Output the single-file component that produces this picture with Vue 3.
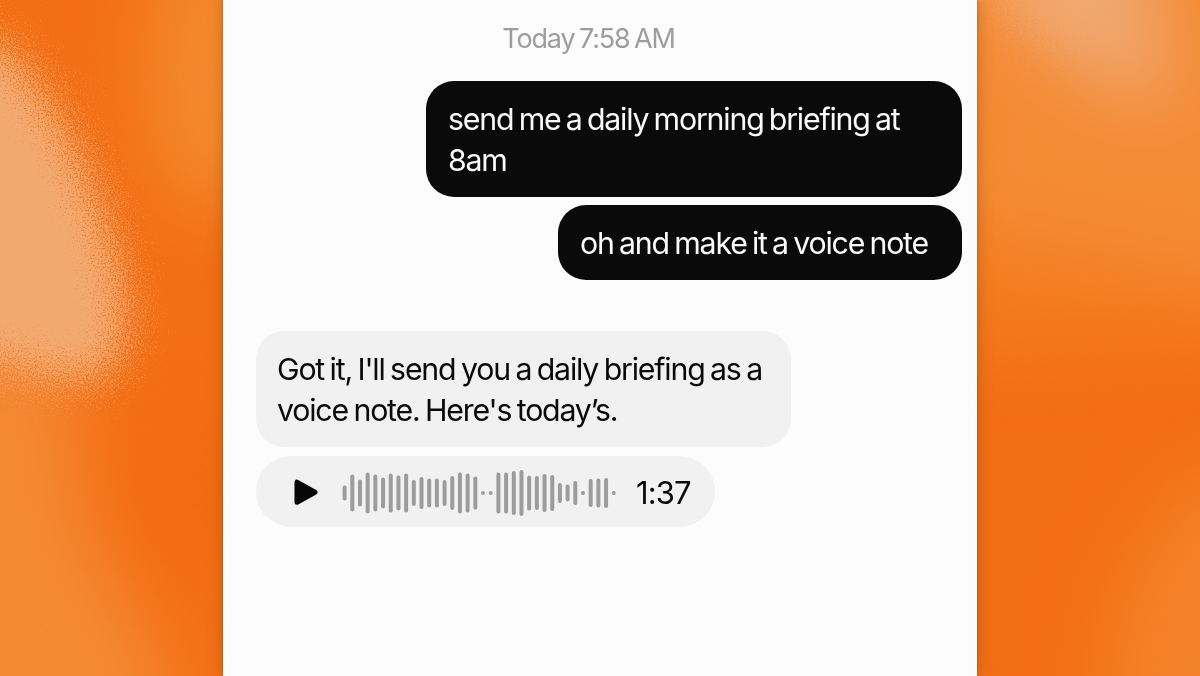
<script setup>
import { ref, computed } from "vue";

const sent = ref([
    "send me a daily morning briefing at 8am",
    "oh and make it a voice note"
])

const reply = ref("Got it, I'll send you a daily briefing as a voice note. Here's today’s.")

// bar heights of the voice note
const levels = [
    15, 37, 27, 41, 37, 31, 39, 35, 39, 26, 32, 29, 29, 26, 34, 41, 39, 33,
    4, 4, 41, 41, 44, 46, 35, 34, 38, 36, 20, 17, 24, 4, 28, 29, 30, 4
]

const bars = computed(() => levels.map((h, i) => ({
    x: i * 7.69 + 0.6,
    y: 24 - h / 2,
    h
})))
</script>


<template>
    <div class="page">
        <!-- Orange backdrop -->
        <svg class="backdrop" width="1200" height="676" viewBox="0 0 1200 676" aria-hidden="true">
            <defs>
                <filter id="soft" x="-100%" y="-100%" width="300%" height="300%" color-interpolation-filters="sRGB">
                    <feGaussianBlur stdDeviation="36" />
                </filter>
                <filter id="edge" x="-100%" y="-100%" width="300%" height="300%" color-interpolation-filters="sRGB">
                    <feGaussianBlur stdDeviation="15" />
                </filter>
                <filter id="grain" filterUnits="userSpaceOnUse" x="-100" y="-100" width="1400" height="876" color-interpolation-filters="sRGB">
                    <feTurbulence type="fractalNoise" baseFrequency="0.6" numOctaves="2" seed="4" result="noise" />
                    <feDisplacementMap in="SourceGraphic" in2="noise" scale="120" xChannelSelector="R" yChannelSelector="G" />
                </filter>
            </defs>
            <!-- smooth colour areas -->
            <rect width="1200" height="676" fill="#f36f16" />
            <g filter="url(#soft)">
                <ellipse cx="215" cy="75" rx="68" ry="140" fill="#f48a2e" />
                <path d="M-150 330 L60 360 L75 450 L85 530 L150 640 L190 760 L-150 800 Z" fill="#f48a34" />
                <ellipse cx="195" cy="490" rx="40" ry="75" fill="#f26910" />
                <path d="M920 -100 L1350 -100 L1350 310 L1130 280 L940 230 Z" fill="#f48b35" />
                <path d="M940 230 L1250 290 L1250 335 L940 350 Z" fill="#f47b20" />
                <path d="M1300 450 L1180 495 L1120 600 L1100 760 L1350 760 Z" fill="#f48229" />
                <path d="M985 -80 L1130 -80 L1175 100 L1120 90 L1020 20 Z" fill="#f0ab78" />
            </g>
            <!-- grainy peach spots -->
            <g filter="url(#grain)">
                <path filter="url(#edge)" d="M-150 20 L0 44 C35 70 78 140 105 220 C124 270 133 330 117 362 C100 388 70 385 0 364 L-150 345 Z" fill="#f2a970" />
                <path filter="url(#edge)" d="M990 -80 L1090 -80 L1100 50 L1060 42 L1000 5 Z" fill="#f2a970" opacity="0.5" />
            </g>
        </svg>

        <!-- Chat -->
        <main class="chat">
            <p class="time">Today 7:58 AM</p>

            <div class="sent">
                <div v-for="msg in sent" :key="msg" class="bubble dark">{{ msg }}</div>
            </div>

            <div class="received">
                <div class="bubble light">{{ reply }}</div>
                <div class="voice">
                    <svg class="play" width="24" height="27" viewBox="0 0 24 27">
                        <path d="M3 3.2 V23.2 L21 13.2 Z" fill="#060606" stroke="#060606" stroke-width="5" stroke-linejoin="round" />
                    </svg>
                    <svg class="wave" width="274" height="48" viewBox="0 0 274 48">
                        <rect v-for="(bar, i) in bars" :key="i" :x="bar.x" :y="bar.y" width="4" :height="bar.h" rx="2" fill="#9c9c9c" />
                    </svg>
                    <span class="length">1:37</span>
                </div>
            </div>
        </main>
    </div>
</template>


<style>
body {
    margin: 0;
    overflow: hidden;
}
</style>

<style scoped>
.page {
    position: relative;
    display: flex;
    justify-content: center;
    width: 1200px;
    height: 676px;
    overflow: hidden;
    font-family: Inter, "Liberation Sans", sans-serif;
}

.backdrop {
    position: absolute;
    top: 0;
    left: 0;
}

.chat {
    position: relative;
    box-sizing: border-box;
    width: 754px;
    height: 676px;
    padding: 21px 15px 0 33px;
    background-color: #fcfcfc;
    box-shadow: 0 0 14px rgba(110, 60, 10, 0.35), 0 0 2px rgba(110, 60, 10, 0.5);
}

.time {
    margin: 0 41px 24px 0;
    font-size: 27px;
    line-height: 36px;
    letter-spacing: -1.15px;
    word-spacing: -2px;
    text-align: center;
    color: #9d9d9d;
}

.sent {
    display: flex;
    flex-direction: column;
    align-items: flex-end;
    gap: 8px;
}

.bubble {
    box-sizing: border-box;
    max-width: 536px;
    border-radius: 28px;
    font-size: 30.3px;
    line-height: 41px;
    letter-spacing: -1.2px;
    word-spacing: -2px;
}

.dark {
    padding: 18px 34px 16px 22px;
    background-color: #0a0a0a;
    color: #fafafa;
}

.received {
    display: flex;
    flex-direction: column;
    align-items: flex-start;
    gap: 9px;
    margin-top: 51px;
}

.light {
    width: 535px;
    padding: 18px 20px 16px 21px;
    background-color: #f1f1f1;
    color: #0a0a0a;
    word-spacing: -1.8px;
}

.voice {
    display: flex;
    align-items: center;
    box-sizing: border-box;
    width: 459px;
    height: 71px;
    padding: 2px 0 0 38px;
    border-radius: 36px;
    background-color: #f1f1f1;
}

.wave {
    margin-left: 24px;
}

.length {
    margin-left: 20px;
    font-size: 31px;
    letter-spacing: -0.9px;
    color: #0a0a0a;
}
</style>
